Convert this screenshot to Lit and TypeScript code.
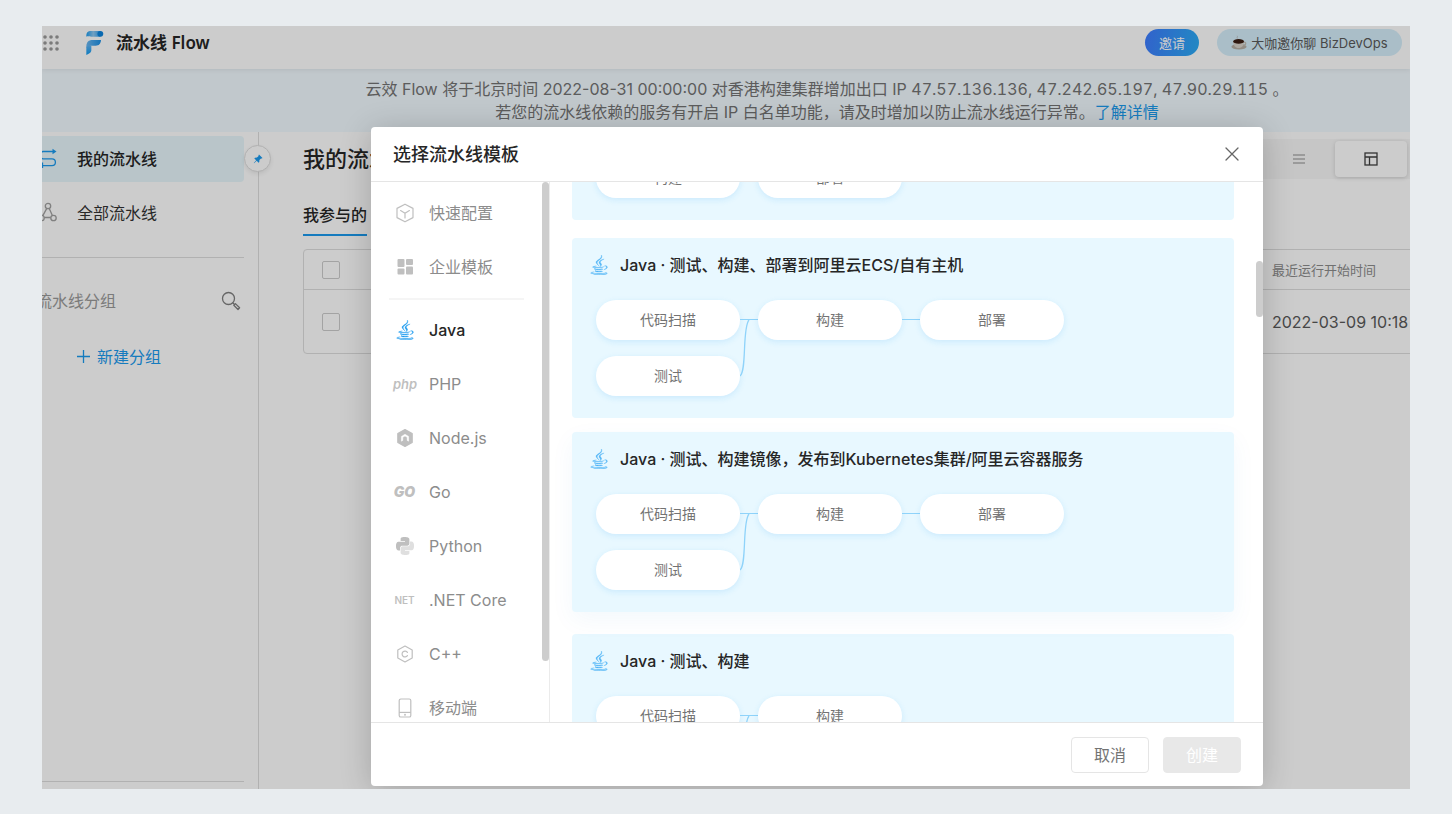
import { LitElement, html, css, svg, nothing } from "lit";
import { customElement, property } from "lit/decorators.js";
import { classMap } from "lit/directives/class-map.js";

const javaPath =
  "M8.851 18.56s-.917.534.653.714c1.902.218 2.874.187 4.969-.211 0 0 .552.346 1.321.646-4.699 2.013-10.633-.118-6.943-1.149M8.276 15.933s-1.028.761.542.924c2.032.209 3.636.227 6.413-.308 0 0 .384.389.987.602-5.679 1.661-12.007.13-7.942-1.218M13.116 11.475c1.158 1.333-.304 2.533-.304 2.533s2.939-1.518 1.589-3.418c-1.261-1.772-2.228-2.652 3.007-5.688 0-.001-8.216 2.051-4.292 6.573M19.33 20.504s.679.559-.747.991c-2.712.822-11.288 1.069-13.669.033-.856-.373.75-.89 1.254-.998.527-.114.828-.093.828-.093-.953-.671-6.156 1.317-2.643 1.887 9.58 1.553 17.462-.7 14.977-1.82M9.292 13.21s-4.362 1.036-1.544 1.412c1.189.159 3.561.123 5.77-.062 1.806-.152 3.618-.477 3.618-.477s-.637.272-1.098.587c-4.429 1.165-12.986.623-10.522-.568 2.082-1.006 3.776-.892 3.776-.892M17.116 17.584c4.503-2.34 2.421-4.589.968-4.285-.355.074-.515.138-.515.138s.132-.207.385-.297c2.875-1.011 5.086 2.981-.928 4.562 0-.001.07-.062.09-.118M14.401 0s2.494 2.494-2.365 6.33c-3.896 3.077-.888 4.832-.001 6.836-2.274-2.053-3.943-3.858-2.824-5.539 1.644-2.469 6.197-3.665 5.19-7.627M9.734 23.924c4.322.277 10.959-.153 11.116-2.198 0 0-.302.775-3.572 1.391-3.688.694-8.239.613-10.937.168 0-.001.553.457 3.393.639";

const pythonPath =
  "M14.25.18l.9.2.73.26.59.3.45.32.34.34.25.34.16.33.1.3.04.26.02.2-.01.13V8.5l-.05.63-.13.55-.21.46-.26.38-.3.31-.33.25-.35.19-.35.14-.33.1-.3.07-.26.04-.21.02H8.77l-.69.05-.59.14-.5.22-.41.27-.33.32-.27.35-.2.36-.15.37-.1.35-.07.32-.04.27-.02.21v3.06H3.17l-.21-.03-.28-.07-.32-.12-.35-.18-.36-.26-.36-.36-.35-.46-.32-.59-.28-.73-.21-.88-.14-1.05-.05-1.23.06-1.22.16-1.04.24-.87.32-.71.36-.57.4-.44.42-.33.42-.24.4-.16.36-.1.32-.05.24-.01h.16l.06.01h8.16v-.83H6.18l-.01-2.75-.02-.37.05-.34.11-.31.17-.28.25-.26.31-.23.38-.2.44-.18.51-.15.58-.12.64-.1.71-.06.77-.04.84-.02 1.27.05z";

const javaIcon = html`<svg width="18" height="20" viewBox="2.5 0 19 24" preserveAspectRatio="none" fill="currentColor" stroke="currentColor" stroke-width=".35"><path d=${javaPath} /></svg>`;

const icons: Record<string, unknown> = {
  box: html`<svg width="20" height="20" viewBox="0 0 20 20" fill="none" stroke="currentColor" stroke-width="1.2" stroke-linejoin="round" stroke-linecap="round">
    <path d="M10 1.2 18 5.4V14.6L10 18.8 2 14.6V5.4Z" /><path d="M5.6 7.6 10 10.2 14.4 7.6M10 10.2V15" />
  </svg>`,
  tiles: html`<svg width="20" height="20" viewBox="0 0 20 20" fill="currentColor">
    <rect x="2.5" y="2" width="7" height="8" rx="1" /><rect x="11" y="2" width="7" height="6" rx="1" />
    <rect x="2.5" y="11.5" width="7" height="6" rx="1" /><rect x="11" y="9.5" width="7" height="8" rx="1" />
  </svg>`,
  java: javaIcon,
  php: html`<span class="word php">php</span>`,
  node: html`<svg width="20" height="20" viewBox="0 0 20 20" fill="currentColor">
    <path d="M10 1.6 17.2 5.5v9L10 18.4 2.8 14.5v-9Z" stroke="currentColor" stroke-width="1.2" stroke-linejoin="round" />
    <path d="M6.4 13.2V8.4L10 6.3l3.6 2.1v4.8l-1.4-.8V9.3L10 8l-2.2 1.3v3.1Z" fill="#fff" stroke="#fff" stroke-width=".5" />
  </svg>`,
  go: html`<span class="word go">GO</span>`,
  python: html`<svg width="18" height="18" viewBox="0 0 24 24" fill="currentColor">
    <path d=${pythonPath} /><path d=${pythonPath} transform="rotate(180 12 12)" opacity=".5" />
  </svg>`,
  net: html`<span class="word net">NET</span>`,
  cpp: html`<svg width="20" height="20" viewBox="0 0 20 20" fill="none" stroke="currentColor" stroke-width="1.2" stroke-linejoin="round" stroke-linecap="round">
    <path d="M10 2 17.2 6v8L10 18 2.8 14V6Z" /><path d="M12.4 8.4A2.9 2.9 0 1 0 12.4 11.6" />
  </svg>`,
  phone: html`<svg width="20" height="20" viewBox="0 0 20 20" fill="none" stroke="currentColor" stroke-width="1.2">
    <rect x="4.2" y="1" width="11.6" height="18" rx="1.6" /><path d="M4.2 14.4H15.8" /><circle cx="10" cy="16.7" r=".4" />
  </svg>`,
};

@customElement("template-card")
export class TemplateCard extends LitElement {
  @property() heading = "";
  @property({ type: Array }) stages: string[][] = [];

  static styles = css`
    :host { display: block; background: #e8f8ff; border-radius: 4px; padding: 14px 18px 22px; }
    :host([raised]) { transform: translateY(-4px); box-shadow: 0 8px 24px rgba(0, 120, 200, 0.05); }
    .head { display: flex; align-items: center; gap: 12px; height: 26px; margin-bottom: 22px; }
    .head svg { color: #4fb4f6; flex: none; }
    h3 { margin: 0; font-size: 16px; font-weight: 500; color: #262626; line-height: 26px; white-space: nowrap; }
    .flow { display: flex; align-items: flex-start; padding-left: 6px; }
    .stage { display: grid; gap: 16px; }
    .node { width: 144px; height: 40px; border-radius: 20px; background: #fff; color: #737373; font-size: 14px; line-height: 40px; text-align: center; box-shadow: 0 2px 6px rgba(27, 154, 238, 0.14); }
    .link { display: block; color: #8fd3fa; flex: none; }
  `;

  private link(branch: boolean) {
    return html`<svg class="link" width="18" height=${branch ? 96 : 40} fill="none" stroke="currentColor">
      <path d="M0 19.5H18" />
      ${branch ? svg`<path d="M0 76C7 71 2 28 9 20" stroke-width="1.3" />` : nothing}
    </svg>`;
  }

  render() {
    return html`
      <div class="head">${javaIcon}<h3>${this.heading}</h3></div>
      <div class="flow">
        ${this.stages.map((stage, i) => html`
          ${i ? this.link(this.stages[i - 1].length > 1) : nothing}
          <div class="stage">${stage.map((n) => html`<div class="node">${n}</div>`)}</div>
        `)}
      </div>
    `;
  }
}

@customElement("template-dialog")
export class TemplateDialog extends LitElement {
  static styles = css`
    :host { display: grid; grid-template-rows: 55px minmax(0, 1fr) 64px; background: #fff; border-radius: 4px; overflow: hidden; box-shadow: 0 4px 32px rgba(0, 0, 0, 0.2); }
    header { display: flex; align-items: center; justify-content: space-between; padding: 0 21px 0 22px; border-bottom: 1px solid #e5e5e5; }
    h2 { margin: 0; font-size: 18px; line-height: 27px; font-weight: 500; color: #262626; }
    button { font: inherit; cursor: pointer; }
    .close { border: 0; background: none; padding: 0; width: 20px; height: 20px; color: #666; display: grid; place-items: center; }
    .body { display: grid; grid-template-columns: 179px minmax(0, 1fr); min-height: 0; position: relative; }
    .kinds, .cards { overflow-y: auto; scrollbar-width: none; min-height: 0; }
    .kinds { border-right: 1px solid #ebebeb; padding-top: 4px; }
    ul { list-style: none; margin: 0; padding: 0; }
    .kind { display: flex; align-items: center; gap: 13px; width: 100%; height: 54px; padding: 0 0 0 22px; border: 0; background: none; color: #8c8c8c; font-size: 16px; line-height: 24px; text-align: left; }
    .kind .slot { width: 23px; display: grid; place-items: center; color: #bfbfbf; flex: none; }
    .kind.on { color: #262626; font-weight: 500; }
    .kind.on .slot { color: #1b9aee; }
    .rule { height: 2px; margin: 4px 25px 3px 18px; background: #f5f5f5; }
    .word { font-weight: 700; font-style: italic; line-height: 16px; }
    .php { font-size: 13px; font-weight: 600; }
    .go { font-size: 14px; font-weight: 900; }
    .net { font-size: 10px; font-style: normal; font-weight: 600; }
    .cards { padding: 20px 29px 20px 22px; }
    .stack { display: grid; gap: 18px; }
    .thumb { position: absolute; width: 7px; border-radius: 4px; background: #cdcdcd; }
    .thumb.left { left: 171px; top: 0; height: 479px; }
    .thumb.right { right: 0; top: 79px; height: 56px; }
    footer { display: flex; align-items: center; justify-content: flex-end; gap: 14px; padding: 0 22px; border-top: 1px solid #e5e5e5; }
    .btn { width: 78px; height: 36px; padding: 0; border-radius: 4px; border: 1px solid #e5e5e5; background: #fff; color: #737373; font-size: 16px; line-height: 32px; }
    .btn:disabled { background: #e8e8e8; border-color: #e8e8e8; color: #fff; cursor: default; }
  `;

  private top = [["box", "快速配置"], ["tiles", "企业模板"]];
  private langs = [
    ["java", "Java"], ["php", "PHP"], ["node", "Node.js"], ["go", "Go"],
    ["python", "Python"], ["net", ".NET Core"], ["cpp", "C++"], ["phone", "移动端"],
  ];
  private templates = [
    { name: "Java · 构建、部署到阿里云ECS/自有主机", stages: [["构建"], ["部署"]] },
    { name: "Java · 测试、构建、部署到阿里云ECS/自有主机", stages: [["代码扫描", "测试"], ["构建"], ["部署"]] },
    { name: "Java · 测试、构建镜像，发布到Kubernetes集群/阿里云容器服务", stages: [["代码扫描", "测试"], ["构建"], ["部署"]], raised: true },
    { name: "Java · 测试、构建", stages: [["代码扫描", "测试"], ["构建"]] },
  ];

  async firstUpdated() {
    const cards = this.renderRoot.querySelector(".cards")!;
    await Promise.all([...this.renderRoot.querySelectorAll("template-card")].map((c) => (c as LitElement).updateComplete));
    cards.scrollTop = 106;
  }

  private kind([icon, label]: string[]) {
    return html`<li><button class=${classMap({ kind: true, on: icon === "java" })}>
      <span class="slot">${icons[icon]}</span>${label}
    </button></li>`;
  }

  render() {
    return html`
      <header>
        <h2>选择流水线模板</h2>
        <button class="close" aria-label="关闭">
          <svg width="14" height="14" viewBox="0 0 14 14" stroke="currentColor" stroke-width="1.3" stroke-linecap="round"><path d="M1 1 13 13M13 1 1 13" /></svg>
        </button>
      </header>
      <div class="body">
        <nav class="kinds">
          <ul>${this.top.map((k) => this.kind(k))}</ul>
          <div class="rule"></div>
          <ul>${this.langs.map((k) => this.kind(k))}</ul>
        </nav>
        <div class="cards">
          <div class="stack">
            ${this.templates.map((t) => html`<template-card .heading=${t.name} .stages=${t.stages} ?raised=${!!t.raised}></template-card>`)}
          </div>
        </div>
        <div class="thumb left"></div>
        <div class="thumb right"></div>
      </div>
      <footer>
        <button class="btn">取消</button>
        <button class="btn" disabled>创建</button>
      </footer>
    `;
  }
}

@customElement("app-root")
export class AppRoot extends LitElement {
  static styles = css`
    :host { display: grid; box-sizing: border-box; height: 100vh; padding: 26px 42px 25px; background: #e8ecef; font-family: Inter, "Noto Sans CJK SC", sans-serif; font-size: 16px; color: #262626; }
    .frame { position: relative; display: grid; grid-template-rows: 43px 63px minmax(0, 1fr); grid-template-columns: minmax(0, 1fr); overflow: hidden; background: #fff; min-height: 0; }
    button { font: inherit; cursor: pointer; border: 0; padding: 0; background: none; color: inherit; }
    a { color: #1b9aee; text-decoration: none; }

    .bar { position: relative; display: flex; align-items: center; padding: 0 8px 10px 0; box-shadow: 0 1px 5px rgba(0, 0, 0, 0.08); }
    .apps { display: grid; width: 18px; height: 18px; color: #9a9a9a; }
    .logo { margin: 0 11px 0 25px; }
    .brand { margin: 0; flex: 1; font-family: "Noto Sans", "Noto Sans CJK SC", sans-serif; font-size: 17px; font-weight: 600; line-height: 24px; }
    .invite { width: 54px; height: 27px; border-radius: 14px; font-size: 13px; color: #fff; background: linear-gradient(100deg, #3e7bff, #2bacf5); margin-right: 18px; }
    .talk { display: flex; align-items: center; justify-content: center; gap: 4px; width: 185px; height: 27px; border-radius: 14px; background: #d5eefa; color: #595959; font-size: 13px; white-space: nowrap; }

    .notice { background: #f2faff; padding: 9px 0 0 202px; text-align: center; color: #737373; line-height: 23px; white-space: nowrap; }
    .notice p { margin: 0; }
    .ips { font-variant-numeric: tabular-nums; }

    .work { display: grid; grid-template-columns: 217px minmax(0, 1fr); min-height: 0; }
    .side { position: relative; display: flex; flex-direction: column; border-right: 1px solid #dedede; margin-left: -24px; padding: 4px 14px 7px 0; }
    .entry { display: flex; align-items: center; gap: 20px; height: 44px; padding: 0 0 2px 19px; margin-bottom: 8px; border-radius: 4px; color: #333; }
    .entry svg { color: #a0a0a0; }
    .entry.on { background: #e8f7fc; font-weight: 500; color: #262626; }
    .entry.on svg { color: #1b9aee; }
    .line { border-top: 1px solid #dedede; }
    .line.first { margin-top: 13px; }
    .group { display: flex; align-items: center; justify-content: space-between; height: 46px; margin-top: 20px; padding: 0 3px 0 18px; line-height: 24px; color: #9a9a9a; }
    .group svg { display: block; color: #808080; }
    .add { display: flex; align-items: center; gap: 7px; height: 46px; margin-top: 9px; padding-left: 59px; color: #1b9aee; }
    .grow { flex: 1; }
    .pin { position: absolute; right: -13px; top: 13px; width: 27px; height: 27px; border-radius: 50%; display: grid; place-items: center; background: #fff; border: 1px solid #dedede; box-sizing: border-box; color: #1b9aee; box-shadow: 0 2px 4px rgba(0, 0, 0, 0.08); }

    .main { padding: 7px 0 0 44px; }
    .top { display: flex; align-items: flex-start; height: 40px; }
    h1 { margin: 0; flex: 1; font-size: 22px; line-height: 40px; font-weight: 500; }
    .views { display: flex; align-items: center; width: 180px; height: 40px; padding-right: 3px; box-sizing: border-box; justify-content: flex-end; background: #f8f8f8; }
    .views button { display: grid; place-items: center; width: 72px; height: 36px; border-radius: 4px; color: #8c8c8c; }
    .views button.on { background: #fff; color: #404040; box-shadow: 0 1px 4px rgba(0, 0, 0, 0.16); }
    .tab { display: block; width: max-content; height: 42px; margin: 15px 0 13px; line-height: 42px; font-weight: 500; border-bottom: 2px solid #1b9aee; box-sizing: border-box; }
    a.tab { color: #262626; }
    .list { width: calc(100% + 40px); border: 1px solid #dedede; border-radius: 4px; }
    table { width: 100%; border-collapse: collapse; table-layout: fixed; }
    th, td { padding: 0; text-align: left; font-weight: 400; white-space: nowrap; }
    th { height: 39px; border-bottom: 1px solid #dedede; font-size: 13px; color: #8c8c8c; }
    td { height: 63px; color: #595959; }
    .pick { padding-left: 18px; }
    .when { width: 179px; }
    input { appearance: none; display: block; box-sizing: border-box; width: 18px; height: 18px; margin: 0; border: 1px solid #ccc; border-radius: 2px; background: #fff; }

    .mask { position: absolute; inset: 0; display: grid; padding: 101px 147px 3px 329px; background: rgba(0, 0, 0, 0.2); }
  `;

  render() {
    return html`
      <div class="frame">
        <header class="bar">
          <button class="apps" aria-label="应用">
            <svg width="18" height="18" viewBox="0 0 18 18" fill="currentColor">
              ${[3, 9, 15].map((y) => [3, 9, 15].map((x) => svg`<circle cx=${x} cy=${y} r="1.8" />`))}
            </svg>
          </button>
          <svg class="logo" width="20" height="26" viewBox="0 2 60 78">
            <defs>
              <linearGradient id="a" x1="0" x2="1"><stop offset="0" stop-color="#1c9df0" /><stop offset=".5" stop-color="#8fc8f2" /><stop offset="1" stop-color="#2ea0ee" /></linearGradient>
              <linearGradient id="b" x1="0" x2="1"><stop offset="0" stop-color="#6cb8f0" /><stop offset="1" stop-color="#1a8fe6" /></linearGradient>
              <linearGradient id="c" x1="0" x2="0" y1="0" y2="1"><stop offset="0" stop-color="#5cb2f2" /><stop offset="1" stop-color="#0f9bf2" /></linearGradient>
            </defs>
            <path d="M4 22C4 9 8 5 18 5H46V22H20C12 22 8 20 4 22Z" fill="url(#a)" />
            <circle cx="46" cy="13.5" r="8.8" fill="#0b83dc" />
            <path d="M4 50C5 38 11 32 22 32H48C47 44 42 49 32 49H18C11 49 7 51 4 56Z" fill="url(#b)" />
            <path d="M4 54C6 50 10 48 19 49V62C19 71 12 73 4 77Z" fill="url(#c)" />
          </svg>
          <h1 class="brand">流水线 Flow</h1>
          <button class="invite">邀请</button>
          <button class="talk">
            <svg width="16" height="16" viewBox="0 0 16 16">
              <ellipse cx="8" cy="11.8" rx="7.6" ry="2.8" fill="#b8b0a6" />
              <path d="M2.2 6C2.2 10.6 4.4 13 7.6 13S13 10.6 13 6Z" fill="#d9d3ca" />
              <path d="M12.8 7.2c2.6-.6 2.8 3-.6 3" fill="none" stroke="#c4bcb2" stroke-width="1.2" />
              <ellipse cx="7.6" cy="6.4" rx="5.4" ry="2.4" fill="#3b1f14" />
              <path d="M6.4 3.6C5.4 2.6 7 2 6.2 .8" fill="none" stroke="#b5b5b5" stroke-width=".8" />
            </svg>
            大咖邀你聊 BizDevOps
          </button>
        </header>

        <div class="notice">
          <p>云效 Flow 将于北京时间 2022-08-31 00:00:00 对香港构建集群增加出口 IP <span class="ips">47.57.136.136, 47.242.65.197, 47.90.29.115</span> 。</p>
          <p>若您的流水线依赖的服务有开启 IP 白名单功能，请及时增加以防止流水线运行异常。<a href="#">了解详情</a></p>
        </div>

        <div class="work">
          <aside class="side">
            <a class="entry on" href="#">
              <svg width="20" height="20" viewBox="0 0 20 20" fill="none" stroke="currentColor" stroke-width="1.3">
                <path d="M16 3.5H6a3.7 3.7 0 0 0 0 7.3h9a3.4 3.4 0 0 1 0 6.8H5" /><path d="M15.5 .8 19.5 3.5 15.5 6.2Z" fill="currentColor" stroke="none" />
                <path d="M5.5 14.6V20" />
              </svg>
              我的流水线
            </a>
            <a class="entry" href="#">
              <svg width="20" height="20" viewBox="0 0 20 20" fill="none" stroke="currentColor" stroke-width="1.3">
                <circle cx="11" cy="4" r="2.7" /><circle cx="4.5" cy="16" r="2.7" /><circle cx="16.5" cy="16" r="2.7" />
                <path d="M9.8 6.4 5.8 13.6M12.2 6.4 15.4 13.5M7.2 15.5H13.8" />
              </svg>
              全部流水线
            </a>
            <div class="line first"></div>
            <div class="group">
              <span>流水线分组</span>
              <button aria-label="搜索">
                <svg width="20" height="20" viewBox="0 0 20 20" fill="none" stroke="currentColor" stroke-width="1.3">
                  <circle cx="7.5" cy="7.5" r="6" /><path d="M11.8 11.8 13.4 13.4" /><path d="M14.4 12.6 18.6 16.8 17 18.5 12.8 14.2Z" stroke-linejoin="round" />
                </svg>
              </button>
            </div>
            <button class="add">
              <svg width="13" height="13" viewBox="0 0 13 13" stroke="currentColor" stroke-width="1.3"><path d="M6.5 0V13M0 6.5H13" /></svg>
              新建分组
            </button>
            <div class="grow"></div>
            <div class="line"></div>
            <button class="pin" aria-label="固定">
              <svg width="10" height="10" viewBox="0 0 10 10" fill="currentColor">
                <path d="M6 .5 9.5 4 8.8 4.5 8 4.4 6.4 6 6.3 8 5.6 8.7 3.7 6.8 1 9.2 .8 9 3.2 6.3 1.3 4.4 2 3.7 4 3.6 5.6 2 5.5 1.2Z" />
              </svg>
            </button>
          </aside>

          <main class="main">
            <div class="top">
              <h1>我的流水线</h1>
              <div class="views">
                <button aria-label="列表">
                  <svg width="12" height="12" viewBox="0 0 12 12" stroke="currentColor" stroke-width="1.2"><path d="M0 2H12M0 6H12M0 10H12" /></svg>
                </button>
                <button class="on" aria-label="看板">
                  <svg width="14" height="14" viewBox="0 0 14 14" fill="none" stroke="currentColor" stroke-width="1.3"><rect x="1" y="1" width="12" height="12" /><path d="M1 5H13M5.5 5V13" /></svg>
                </button>
              </div>
            </div>
            <a class="tab" href="#">我参与的</a>
            <div class="list">
              <table>
                <thead><tr><th class="pick"><input type="checkbox" aria-label="全选" /></th><th class="when">最近运行开始时间</th></tr></thead>
                <tbody><tr><td class="pick"><input type="checkbox" aria-label="选择" /></td><td>2022-03-09 10:18</td></tr></tbody>
              </table>
            </div>
          </main>
        </div>

        <div class="mask"><template-dialog role="dialog" aria-label="选择流水线模板"></template-dialog></div>
      </div>
    `;
  }
}
